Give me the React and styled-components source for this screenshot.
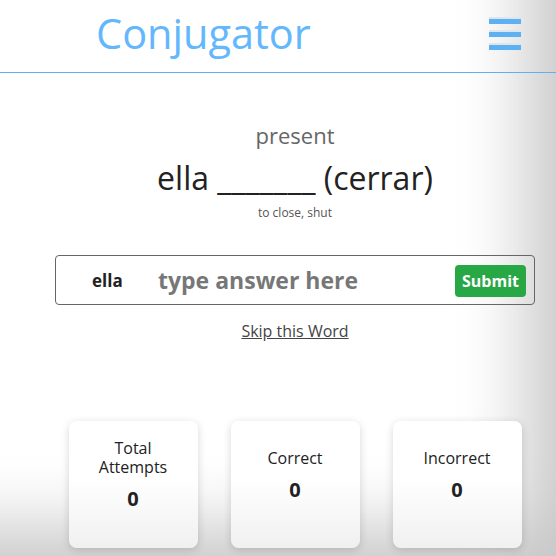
import styled, { createGlobalStyle } from "styled-components";

const Global = createGlobalStyle`
  html, body {
    margin: 0;
    padding: 0;
    background: #fff;
    font-family: "Open Sans", "Noto Sans", sans-serif;
  }
`;

const Page = styled.div`
  width: 556px;
  height: 556px;
  overflow: hidden;
  box-shadow: inset -70px -70px 70px -40px rgba(0, 0, 0, 0.22);
`;

const Header = styled.header`
  height: 73px;
  border-bottom: 1px solid #63aeec;
  display: flex;
  align-items: center;
  justify-content: space-between;
  padding: 0 35px 0 96px;
  box-sizing: border-box;
`;

const Title = styled.h1`
  margin: 0;
  font-size: 41.5px;
  font-weight: 400;
  color: #63b7fc;
  margin-top: -7px;
`;

const Burger = styled.div`
  display: flex;
  flex-direction: column;
  gap: 8px;
  margin-top: -4px;
`;

const Bar = styled.span`
  display: block;
  width: 32px;
  height: 5px;
  background: #5db0f1;
  box-shadow: 0 -2px 0 #dde6ee;
`;

const Main = styled.main`
  width: 480px;
  margin-left: 55px;
  display: flex;
  flex-direction: column;
  align-items: center;
`;

const Tense = styled.div`
  margin-top: 47px;
  font-size: 22px;
  color: #666;
  line-height: 30px;
`;

const Prompt = styled.div`
  font-size: 32px;
  color: #222;
  line-height: 44px;
  margin-top: 6px;
`;

const Meaning = styled.div`
  font-size: 12px;
  color: #555;
  margin-top: 4px;
`;

const AnswerBox = styled.div`
  margin-top: 34px;
  width: 100%;
  height: 50px;
  box-sizing: border-box;
  border: 1px solid #666;
  border-radius: 4px;
  display: flex;
  align-items: center;
  padding: 0 8px 0 36px;
`;

const Pronoun = styled.span`
  font-weight: 700;
  font-size: 17px;
  color: #222;
  width: 66px;
  flex-shrink: 0;
`;

const Answer = styled.input`
  flex: 1;
  min-width: 0;
  border: none;
  outline: none;
  background: transparent;
  font-family: inherit;
  font-weight: 700;
  font-size: 23px;
  color: #333;
  padding: 0;
  &::placeholder {
    color: #777;
  }
`;

const Submit = styled.button`
  background: #28a745;
  color: #fff;
  border: none;
  border-radius: 4px;
  font-family: inherit;
  font-weight: 700;
  font-size: 16px;
  height: 32px;
  padding: 0 7px;
  margin-top: 1px;
`;

const Skip = styled.a`
  margin-top: 15px;
  font-size: 16px;
  color: #444;
  text-decoration: underline;
`;

const Stats = styled.div`
  margin-top: 79px;
  display: flex;
  gap: 33px;
`;

const Card = styled.div`
  width: 129px;
  height: 127px;
  box-sizing: border-box;
  border-radius: 8px;
  background: linear-gradient(#fff 45%, #f0f0f0);
  box-shadow: 0 2px 8px rgba(0, 0, 0, 0.16);
  display: flex;
  flex-direction: column;
  align-items: center;
  justify-content: center;
  padding-bottom: 18px;
  text-align: center;
`;

const Label = styled.div`
  font-size: 16px;
  line-height: 19px;
  color: #222;
`;

const Count = styled.div`
  margin-top: 8px;
  font-size: 20px;
  font-weight: 700;
  color: #222;
`;

const stats = [
  { label: ["Total", "Attempts"], value: 0 },
  { label: ["Correct"], value: 0 },
  { label: ["Incorrect"], value: 0 },
];

export default function App() {
  return (
    <Page>
      <Global />
      <Header>
        <Title>Conjugator</Title>
        <Burger>
          <Bar />
          <Bar />
          <Bar />
        </Burger>
      </Header>
      <Main>
        <Tense>present</Tense>
        <Prompt>ella _______ (cerrar)</Prompt>
        <Meaning>to close, shut</Meaning>
        <AnswerBox>
          <Pronoun>ella</Pronoun>
          <Answer placeholder="type answer here" />
          <Submit>Submit</Submit>
        </AnswerBox>
        <Skip>Skip this Word</Skip>
        <Stats>
          {stats.map((s) => (
            <Card key={s.label[0]}>
              <Label>
                {s.label.map((line) => (
                  <div key={line}>{line}</div>
                ))}
              </Label>
              <Count>{s.value}</Count>
            </Card>
          ))}
        </Stats>
      </Main>
    </Page>
  );
}
